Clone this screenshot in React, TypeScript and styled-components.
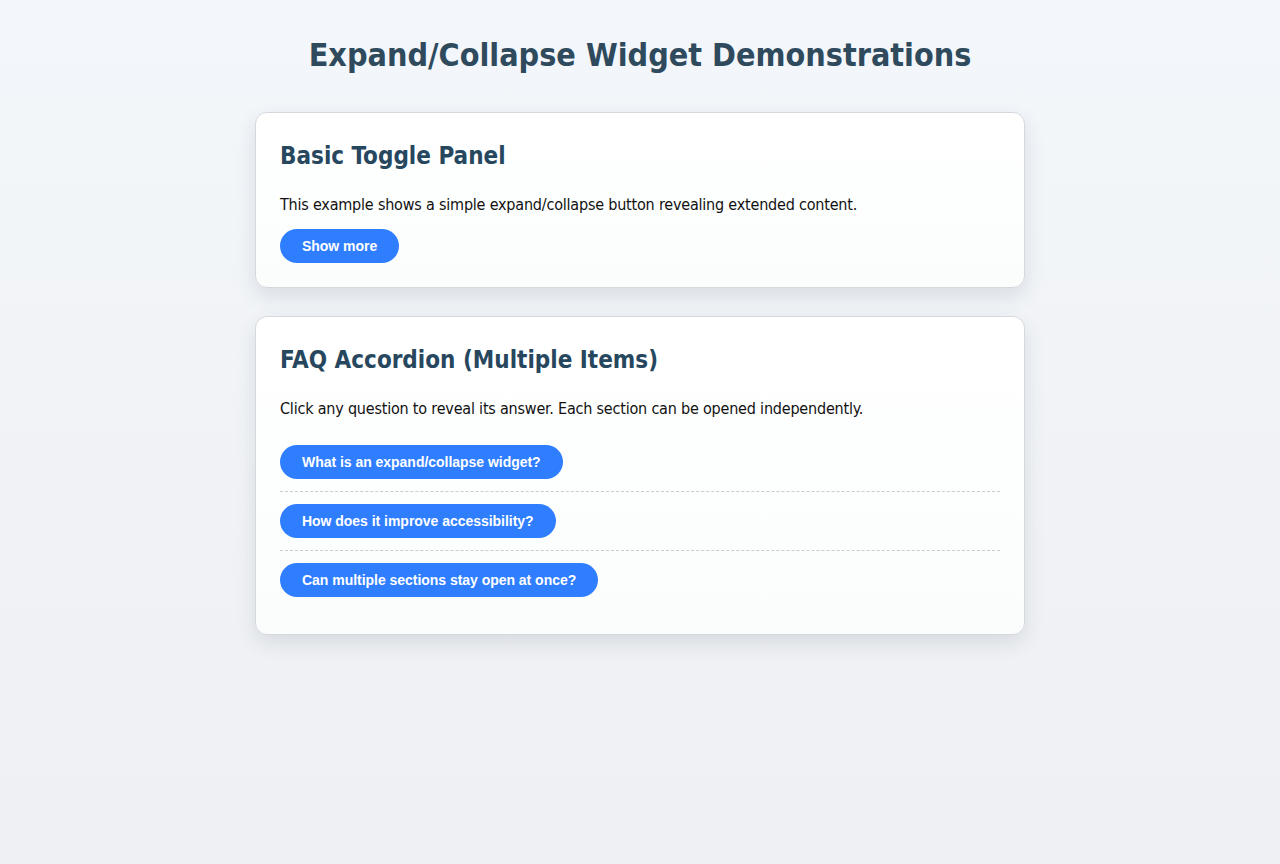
import React from 'react';
import styled, { createGlobalStyle } from 'styled-components';

const GlobalStyle = createGlobalStyle`
    html, body {
        margin: 0;
        padding: 0;
        min-height: 100%;
    }
    body {
        font-family: 'DejaVu Sans Condensed', 'DejaVu Sans', Verdana, sans-serif;
        background: linear-gradient(180deg, #f3f6fa 0%, #eef0f3 100%);
        min-height: 864px;
        color: #111;
    }
`;

const Page = styled.main`
    padding: 36px 16px 40px;
`;

const Title = styled.h1`
    margin: 0 0 38px;
    text-align: center;
    font-size: 32px;
    line-height: 1.2;
    font-weight: bold;
    color: #2e4a5c;
`;

const Card = styled.section`
    max-width: 720px;
    margin: 0 auto 28px;
    padding: 24px 24px;
    background: linear-gradient(180deg, #ffffff 0%, #fbfdfd 100%);
    border: 1px solid #d5d9de;
    border-radius: 12px;
    box-shadow: 0 8px 20px rgba(40, 55, 70, 0.12);
`;

const CardTitle = styled.h2`
    margin: 5px 0 22px;
    font-size: 24px;
    line-height: 1.2;
    font-weight: bold;
    color: #27475e;
`;

const Text = styled.p`
    margin: 0 0 12px;
    font-size: 16px;
    line-height: 24px;
    letter-spacing: -0.2px;
`;

const PillButton = styled.button`
    display: inline-block;
    height: 34px;
    padding: 0 22px;
    border: none;
    border-radius: 17px;
    background: #2f7eff;
    color: #fff;
    font-family: 'Liberation Sans', Arial, sans-serif;
    font-size: 14px;
    font-weight: bold;
    letter-spacing: -0.03px;
    cursor: pointer;
`;

const FaqList = styled.div`
    display: flex;
    flex-direction: column;
`;

const FaqItem = styled.div<{ $last?: boolean }>`
    padding: 12px 0 ${p => (p.$last ? '13px' : '12px')};
    border-bottom: ${p => (p.$last ? 'none' : '1px dashed #c9ccd0')};
`;

const Answer = styled.p`
    margin: 10px 0 0;
    font-size: 15px;
    line-height: 22px;
    color: #333;
`;

const faqs = [
    {
        q: 'What is an expand/collapse widget?',
        a: 'It is a control that shows or hides a section of content on demand.'
    },
    {
        q: 'How does it improve accessibility?',
        a: 'Using a real button with aria-expanded lets assistive technology announce the state.'
    },
    {
        q: 'Can multiple sections stay open at once?',
        a: 'Yes. Each item here keeps its own state, so any number can be open.'
    }
];

const App: React.FunctionComponent = () => {
    const [more, setMore] = React.useState(false);
    const [open, setOpen] = React.useState<boolean[]>([false, false, false]);

    const toggle = (i: number) => {
        setOpen(prev => prev.map((v, j) => (j === i ? !v : v)));
    };

    return (
        <>
            <GlobalStyle />
            <Page>
                <Title>Expand/Collapse Widget Demonstrations</Title>
                <Card>
                    <CardTitle>Basic Toggle Panel</CardTitle>
                    <Text>This example shows a simple expand/collapse button revealing extended content.</Text>
                    {more && (
                        <Text>
                            Here is the extended content. It stays hidden until the button is pressed.
                        </Text>
                    )}
                    <PillButton aria-expanded={more} onClick={() => setMore(!more)}>
                        {more ? 'Show less' : 'Show more'}
                    </PillButton>
                </Card>
                <Card>
                    <CardTitle>FAQ Accordion (Multiple Items)</CardTitle>
                    <Text>Click any question to reveal its answer. Each section can be opened independently.</Text>
                    <FaqList>
                        {faqs.map((f, i) => (
                            <FaqItem key={f.q} $last={i === faqs.length - 1}>
                                <PillButton aria-expanded={open[i]} onClick={() => toggle(i)}>
                                    {f.q}
                                </PillButton>
                                {open[i] && <Answer>{f.a}</Answer>}
                            </FaqItem>
                        ))}
                    </FaqList>
                </Card>
            </Page>
        </>
    );
};

export default App;
